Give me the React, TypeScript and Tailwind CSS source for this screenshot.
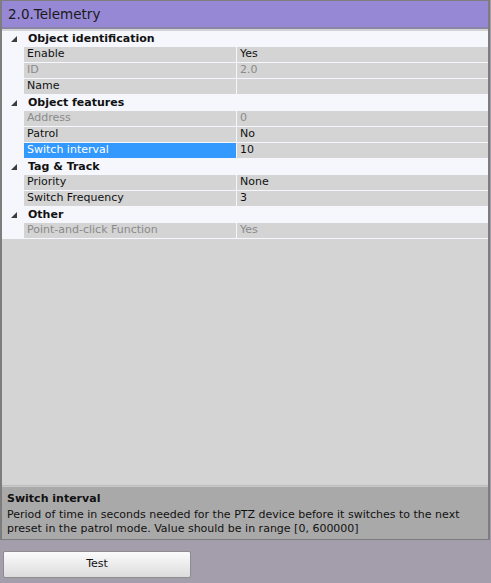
import React from 'react'

type Row =
    | { kind: 'group'; label: string }
    | { kind: 'item'; label: string; value: string; disabled?: boolean; selected?: boolean }

const rows: Row[] = [
    { kind: 'group', label: 'Object identification' },
    { kind: 'item', label: 'Enable', value: 'Yes' },
    { kind: 'item', label: 'ID', value: '2.0', disabled: true },
    { kind: 'item', label: 'Name', value: '' },
    { kind: 'group', label: 'Object features' },
    { kind: 'item', label: 'Address', value: '0', disabled: true },
    { kind: 'item', label: 'Patrol', value: 'No' },
    { kind: 'item', label: 'Switch interval', value: '10', selected: true },
    { kind: 'group', label: 'Tag & Track' },
    { kind: 'item', label: 'Priority', value: 'None' },
    { kind: 'item', label: 'Switch Frequency', value: '3' },
    { kind: 'group', label: 'Other' },
    { kind: 'item', label: 'Point-and-click Function', value: 'Yes', disabled: true },
]

function Arrow() {
    return (
        <svg width="6" height="6" viewBox="0 0 6 6" className='ml-[9px] mr-[11px]'>
            <polygon points="6,0 6,6 0,6" fill="#3c3c3c" />
        </svg>
    )
}

function App() {
    return (
        <div className="w-[491px] h-[583px] bg-[#a39dac] flex flex-col font-['DejaVu_Sans',sans-serif] text-[11px] text-[#111] overflow-hidden">
            <div className='w-[490px] h-[540px] border-l-2 border-t border-r-2 border-b border-[#7d7d7d] flex flex-col'>
                <div className='h-[28px] bg-[#9688d4] flex items-center pl-[6px] text-[13.5px] text-[#1a1a1a] border-b-2 border-[#8a84a6]'>
                    2.0.Telemetry
                </div>
                <div className='flex-1 bg-[#d4d4d4] flex flex-col pt-[2px] border-b border-[#bdbdbd]'>
                    {rows.map((r, i) =>
                        r.kind === 'group' ? (
                            <div key={i} className='h-[16px] bg-[#f5f7fc] flex items-center font-bold'>
                                <Arrow />
                                <span>{r.label}</span>
                            </div>
                        ) : (
                            <div key={i} className='h-[16px] bg-[#f5f7fc] flex pl-[22px]'>
                                <div className={'w-[212px] h-[15px] flex items-center pl-[3px] mr-[1px] ' + (r.selected ? 'bg-[#3399ff] text-white' : 'bg-[#d4d4d4]') + (r.disabled ? ' text-[#8a8a8a]' : '')}>
                                    {r.label}
                                </div>
                                <div className={'flex-1 h-[15px] bg-[#d4d4d4] flex items-center pl-[3px]' + (r.disabled ? ' text-[#8a8a8a]' : '')}>
                                    {r.value}
                                </div>
                            </div>
                        )
                    )}
                </div>
                <div className='h-[53px] bg-[#a9a9a9] border-t border-[#c9c9c9] px-[5px] pt-[5px] leading-[14px]'>
                    <p className='font-bold mb-[2px]'>Switch interval</p>
                    <p>Period of time in seconds needed for the PTZ device before it switches to the next preset in the patrol mode. Value should be in range [0, 600000]</p>
                </div>
            </div>
            <div className='px-[3px] pt-[11px]'>
                <button className='w-[188px] h-[27px] rounded-[2px] border border-[#8d8d8d] bg-gradient-to-b from-[#fbfbfb] to-[#dcdcdc] flex items-center justify-center text-[11px] text-[#111]'>
                    Test
                </button>
            </div>
        </div>
    )
}

export default App
